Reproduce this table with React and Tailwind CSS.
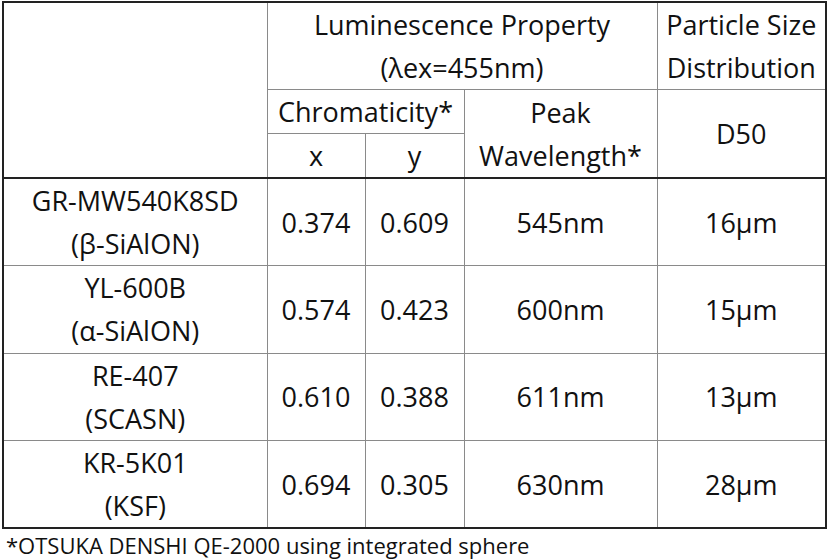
export default function App() {
  const rows = [
    ["GR-MW540K8SD", "(β-SiAlON)", "0.374", "0.609", "545nm", "16µm"],
    ["YL-600B", "(α-SiAlON)", "0.574", "0.423", "600nm", "15µm"],
    ["RE-407", "(SCASN)", "0.610", "0.388", "611nm", "13µm"],
    ["KR-5K01", "(KSF)", "0.694", "0.305", "630nm", "28µm"],
  ];
  const cell = "border border-[#8a8a8a] text-center align-middle p-0";
  return (
    <div className="w-[828px] h-[560px] bg-white overflow-hidden text-[#111] text-[27px] leading-[43px]" style={{ fontFamily: '"Open Sans", "Noto Sans", sans-serif' }}>
      <div className="pl-[2px] pt-[1px]">
        <table className="table-fixed border-collapse border-2 border-[#222] w-[823px]">
          <colgroup>
            <col className="w-[264px]" />
            <col className="w-[98px]" />
            <col className="w-[99px]" />
            <col className="w-[193px]" />
            <col className="w-[169px]" />
          </colgroup>
          <thead>
            <tr className="h-[87px]">
              <th rowSpan={3} className={cell + " font-normal border-b-2 border-b-[#222]"}></th>
              <th colSpan={3} className={cell + " font-normal"}>
                <div>Luminescence Property</div>
                <div>(λex=455nm)</div>
              </th>
              <th className={cell + " font-normal"}>
                <div>Particle Size</div>
                <div>Distribution</div>
              </th>
            </tr>
            <tr className="h-[44px]">
              <th colSpan={2} className={cell + " font-normal"}>Chromaticity*</th>
              <th rowSpan={2} className={cell + " font-normal border-b-2 border-b-[#222]"}>
                <div>Peak</div>
                <div>Wavelength*</div>
              </th>
              <th rowSpan={2} className={cell + " font-normal border-b-2 border-b-[#222]"}>D50</th>
            </tr>
            <tr className="h-[43px]">
              <th className={cell + " font-normal border-b-2 border-b-[#222]"}>x</th>
              <th className={cell + " font-normal border-b-2 border-b-[#222]"}>y</th>
            </tr>
          </thead>
          <tbody>
            {rows.map((r) => (
              <tr key={r[0]} className="h-[87.5px]">
                <td className={cell}>
                  <div>{r[0]}</div>
                  <div>{r[1]}</div>
                </td>
                <td className={cell}>{r[2]}</td>
                <td className={cell}>{r[3]}</td>
                <td className={cell}>{r[4]}</td>
                <td className={cell}>{r[5]}</td>
              </tr>
            ))}
          </tbody>
        </table>
        <div className="pl-[4px] text-[22px] leading-[30px] mt-[1px]">*OTSUKA DENSHI QE-2000 using integrated sphere</div>
      </div>
    </div>
  );
}
